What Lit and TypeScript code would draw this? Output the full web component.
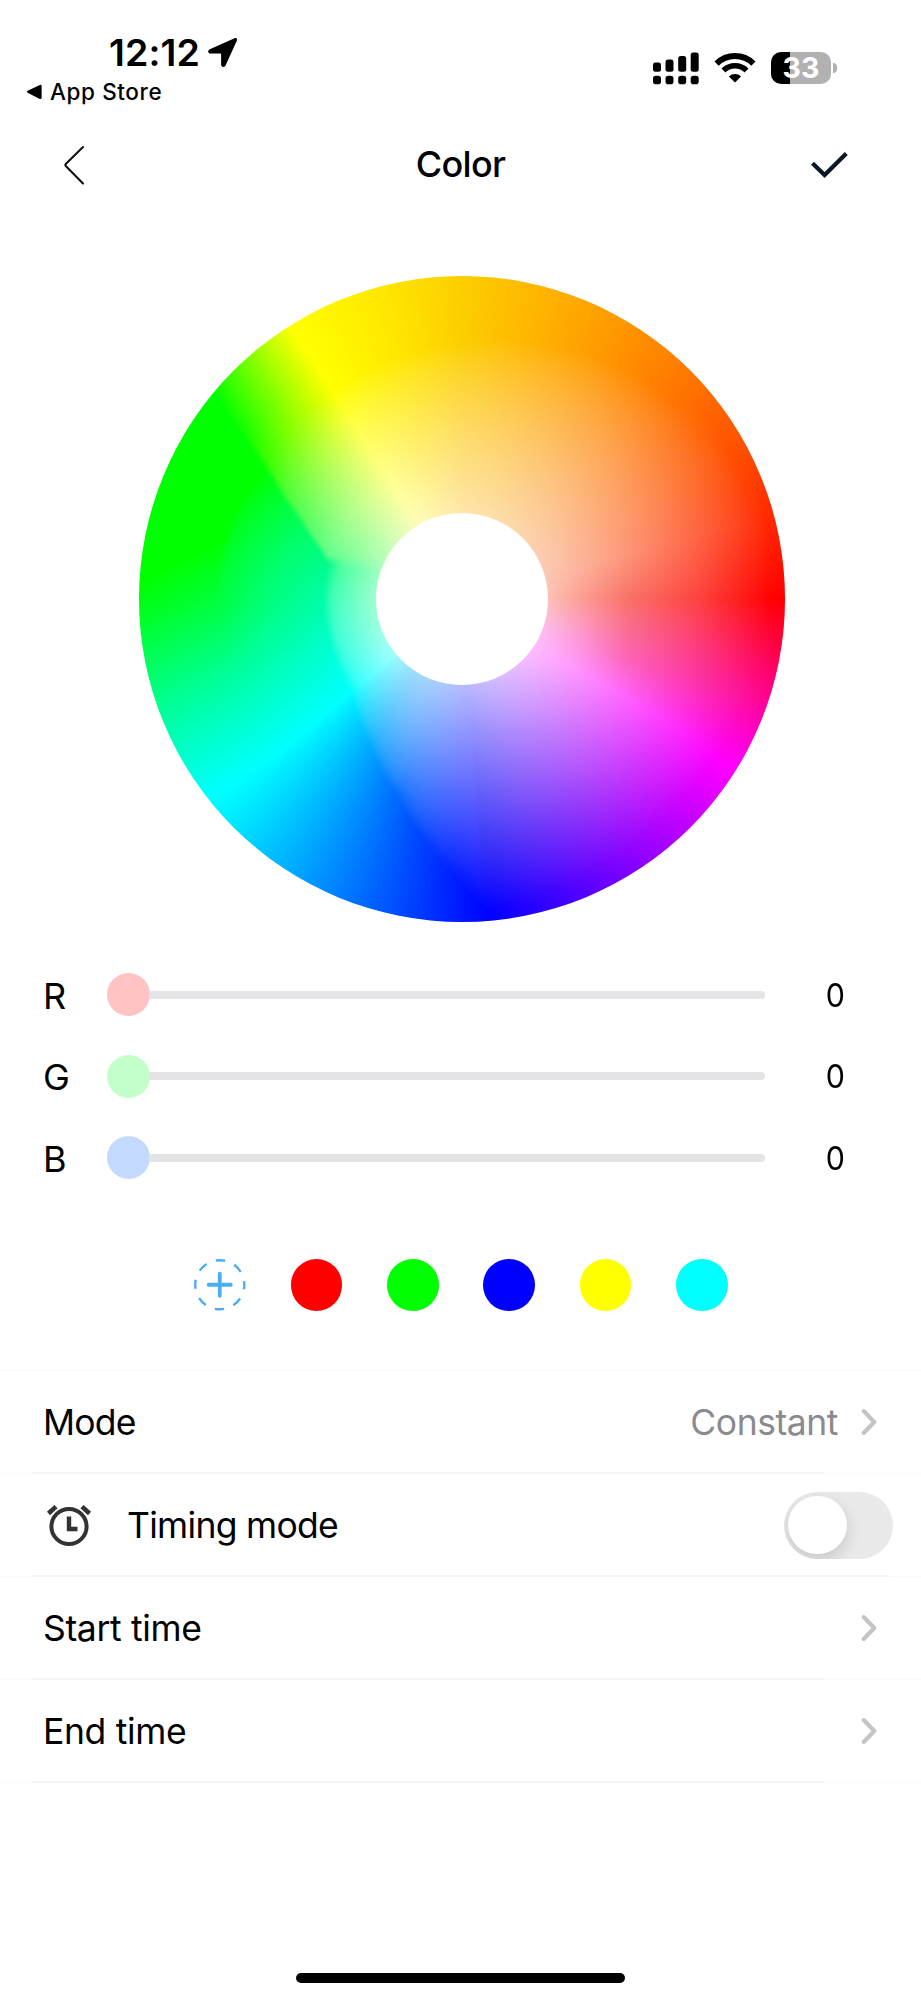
import { LitElement, html, css, svg } from "lit";
import { customElement, property } from "lit/decorators.js";

type RGB = [number, number, number];
/** [radius, angle in degrees counter-clockwise from east, colour] */
type Node = [number, number, RGB];

const OUTER = 743;
const INNER = 190;

const lerp = (a: number, b: number, t: number) => a + (b - a) * t;
const mix = (a: RGB, b: RGB, t: number): RGB => [lerp(a[0], b[0], t), lerp(a[1], b[1], t), lerp(a[2], b[2], t)];

/** A straight spoke, pure outside the edge radius and fading to a pale tint at the hub. */
const spoke = (angle: number, edge: number, pure: RGB, pale: RGB, power = 0.8): Node[] => {
  const nodes: Node[] = [[OUTER, angle, pure]];
  for (let i = 0; i <= 12; i++) {
    const t = i / 12;
    nodes.push([lerp(edge, INNER, t), angle, mix(pure, pale, Math.pow(t, power))]);
  }
  return nodes;
};

/** Where the pale area begins between blue and cyan: [angle, radius]. */
const EDGE: [number, number][] = [[-85, 728], [-90.4, 649], [-98.6, 565], [-107.5, 481], [-121.8, 399], [-140, 330]];

const blueToCyan = (): Node[][] => {
  const out: Node[][] = [];
  for (let a = -86.5; a >= -138; a -= 1.5) {
    let i = 1;
    while (a < EDGE[i][0]) i++;
    const t = (EDGE[i - 1][0] - a) / (EDGE[i - 1][0] - EDGE[i][0]);
    const edge = lerp(EDGE[i - 1][1], EDGE[i][1], t);
    const h = (-85 - a) / 55.5;
    const pale: RGB = h < 0.7 ? mix([188, 186, 254], [162, 222, 252], h / 0.7) : mix([162, 222, 252], [162, 253, 255], (h - 0.7) / 0.3);
    out.push(spoke(a, edge, [0, 255 * h, 255], pale, lerp(0.98, 0.66, Math.min(1, h / 0.45))));
  }
  return out;
};

/** Colour curves of the wheel, ordered clockwise starting at red. */
const CURVES: Node[][] = [
  [[743, 0, [255, 0, 0]], [705, 0, [255, 4, 4]], [640, 0, [254, 30, 28]], [537, 0, [253, 69, 66]], [383, 0, [249, 113, 103]], [306, 0, [251, 144, 134]], [190, 0, [252, 195, 184]]],
  [[743, -20, [255, 0, 160]], [394, -20, [252, 104, 186]], [300, -20, [253, 145, 215]], [190, -20, [254, 190, 238]]],
  [[743, -32, [255, 0, 255]], [690, -32, [255, 0, 255]], [560, -31, [255, 50, 255]], [395, -31, [255, 116, 255]], [300, -32, [255, 152, 255]], [190, -35, [255, 192, 255]]],
  [[743, -85, [0, 0, 255]], [720, -85, [2, 2, 255]], [570, -85, [54, 53, 246]], [470, -85, [89, 88, 249]], [350, -85, [131, 130, 251]], [190, -85, [190, 188, 255]]],
  ...blueToCyan(),
  [[743, -141.7, [0, 255, 255]], [708, -141.7, [0, 255, 255]], [556, -139.8, [0, 255, 255]], [333, -139.8, [0, 255, 255]], [310, -139.8, [55, 255, 255]], [222, -139.8, [145, 255, 255]], [190, -139.8, [165, 255, 255]]],
  [[743, -160, [0, 255, 150]], [560, -160, [0, 255, 164]], [450, -160, [0, 255, 184]], [322, -160, [0, 255, 208]], [300, -160, [65, 255, 218]], [190, -160, [165, 255, 230]]],
  [[743, -178, [0, 255, 28]], [560, -178, [0, 255, 68]], [450, -178, [0, 255, 124]], [320, -178, [0, 253, 172]], [298, -178, [65, 255, 190]], [190, -178, [165, 255, 210]]],
  [[743, -182.4, [0, 255, 0]], [562, -194, [0, 255, 0]], [556, -203.4, [0, 255, 0]], [540, -210, [0, 255, 4]], [516, -209, [0, 255, 26]], [414, -202, [0, 255, 98]], [320, -192, [0, 252, 146]], [290, -192, [70, 255, 165]], [190, -192, [165, 255, 200]]],
  [[743, -219.3, [0, 255, 0]], [732, -219.5, [0, 255, 0]], [623, -216.4, [0, 255, 0]], [547, -213.5, [0, 255, 0]], [516, -212, [0, 255, 22]], [414, -205.3, [0, 255, 90]], [356, -199.6, [0, 252, 118]], [320, -194.6, [0, 250, 138]], [290, -195, [75, 255, 160]], [190, -197, [168, 255, 194]]],
  [[743, -220.5, [12, 255, 0]], [623, -217.8, [28, 255, 0]], [560, -215.5, [50, 255, 0]], [516, -213.8, [68, 254, 22]], [414, -207.6, [86, 253, 92]], [356, -202.2, [92, 253, 120]], [320, -198, [100, 253, 140]], [260, -202, [140, 255, 162]], [190, -203, [178, 255, 188]]],
  [[743, -237.6, [255, 255, 0]], [565, -238.2, [255, 255, 0]], [480, -238.2, [255, 255, 66]], [389, -238.2, [255, 255, 116]], [300, -238.6, [255, 255, 150]], [190, -240, [255, 252, 188]]],
  spoke(-255, 575, [255, 231, 0], [255, 242, 178]),
  spoke(-270, 590, [252, 206, 0], [254, 230, 172]),
  spoke(-285, 612, [255, 180, 0], [253, 226, 170]),
  spoke(-300, 640, [255, 152, 0], [252, 220, 172]),
  spoke(-315, 665, [255, 120, 0], [252, 214, 176]),
  spoke(-330, 700, [255, 84, 0], [252, 208, 180], 0.85),
  spoke(-345, 725, [255, 42, 0], [252, 202, 182], 0.85),
];

const sample = (curve: Node[], r: number): [number, RGB] => {
  if (r >= curve[0][0]) return [curve[0][1], curve[0][2]];
  for (let i = 1; i < curve.length; i++) {
    const a = curve[i - 1];
    const b = curve[i];
    if (r >= b[0] && a[0] > b[0]) {
      const t = (a[0] - r) / (a[0] - b[0]);
      return [lerp(a[1], b[1], t), mix(a[2], b[2], t)];
    }
  }
  const last = curve[curve.length - 1];
  return [last[1], last[2]];
};

const conicAt = (r: number): string => {
  const stops = CURVES.map((c) => sample(c, r)).map(([a, c]) => `rgb(${c.map((v) => v.toFixed(1)).join(",")}) ${(-a).toFixed(2)}deg`);
  const red = sample(CURVES[0], r)[1];
  stops.push(`rgb(${red.map((v) => v.toFixed(1)).join(",")}) 360deg`);
  return `conic-gradient(from 90deg, ${stops.join(",")})`;
};

const RINGS = 110;

@customElement("color-wheel")
class ColorWheel extends LitElement {
  static styles = css`
    :host { display: block; }
    .wheel { display: grid; width: 646px; height: 646px; border-radius: 50%; overflow: hidden; }
    .layer { grid-area: 1 / 1; }
    .hub { grid-area: 1 / 1; place-self: center; z-index: 1; width: 172px; height: 172px; border-radius: 50%; background: #fff; }
  `;
  render() {
    const layers = [];
    for (let i = 0; i <= RINGS; i++) {
      const r = lerp(OUTER, INNER, i / RINGS);
      const px = (r / OUTER) * 323;
      const next = (lerp(OUTER, INNER, (i - 1) / RINGS) / OUTER) * 323;
      const mask = i === 0 ? "" : `mask-image:radial-gradient(circle,#000 ${px.toFixed(2)}px,transparent ${next.toFixed(2)}px)`;
      layers.push(html`<div class="layer" style="background:${conicAt(r)};${mask}"></div>`);
    }
    return html`<div class="wheel">${layers}<div class="hub"></div></div>`;
  }
}

@customElement("channel-slider")
class ChannelSlider extends LitElement {
  @property() label = "";
  @property() tint = "";
  @property({ type: Number }) value = 0;
  static styles = css`
    :host { display: flex; align-items: center; height: 81.5px; padding-left: 43px; }
    .label { width: 64px; font-size: 36px; line-height: 44px; padding-top: 1.5px; box-sizing: border-box; }
    .bar { display: flex; align-items: center; width: 658px; }
    .thumb { width: 43.2px; height: 43.2px; border-radius: 50%; }
    .track { flex: 1; height: 8px; background: #e4e4e6; border-radius: 0 4px 4px 0; margin-left: -1px; }
    .value { width: 140px; text-align: center; font-size: 33px; line-height: 44px; }
    .digit { display: inline-block; transform: scaleX(0.92); }
  `;
  render() {
    return html`
      <div class="label">${this.label}</div>
      <div class="bar"><div class="thumb" style="background:${this.tint}"></div><div class="track"></div></div>
      <div class="value"><span class="digit">${this.value}</span></div>`;
  }
}

const chevron = html`<svg width="16" height="28" viewBox="0 0 16 28" fill="none" stroke="#c4c4c6" stroke-width="4" stroke-linecap="round" stroke-linejoin="round"><path d="M2.7 3 13.3 14 2.7 25" /></svg>`;

@customElement("app-root")
class AppRoot extends LitElement {
  static styles = css`
    :host { display: flex; flex-direction: column; width: 921px; height: 2000px; background: #fff; color: #000; font-family: Inter, "Liberation Sans", sans-serif; overflow: hidden; }
    svg { display: block; }
    .status { display: flex; justify-content: space-between; height: 110px; box-sizing: border-box; padding: 31px 84px 0 26px; }
    .clock { display: flex; align-items: center; height: 44px; padding-left: 83px; gap: 8.5px; }
    .time { font-size: 37.5px; font-weight: 600; line-height: 44px; letter-spacing: 0.1px; }
    .back-app { display: flex; align-items: center; gap: 8px; height: 33px; font-size: 22.5px; font-weight: 500; letter-spacing: 0.6px; }
    .right { display: flex; padding-top: 19.5px; gap: 15px; }
    .battery { display: flex; align-items: center; gap: 2px; height: 34px; }
    .cell { width: 60px; height: 32px; border-radius: 10px; box-sizing: border-box; background: linear-gradient(90deg, #000 19.5px, #b1b1b1 19.5px); color: #fff; font-size: 28.5px; font-weight: 700; line-height: 32px; text-align: center; }
    .nub { width: 4px; height: 10px; border-radius: 0 5px 5px 0; background: #b1b1b1; }
    .nav { display: grid; grid-template-columns: 1fr auto 1fr; align-items: center; height: 110px; box-sizing: border-box; padding: 0 72px 0 63px; }
    .title { font-size: 36px; font-weight: 500; line-height: 44px; letter-spacing: -0.7px; translate: 4.5px -1px; }
    .confirm { justify-self: end; }
    .picker { padding: 56px 0 0 138.6px; height: 734px; box-sizing: border-box; }
    .sliders { height: 277px; }
    .swatches { display: flex; gap: 44.9px; height: 138.5px; padding: 28px 0 0 194.3px; box-sizing: border-box; }
    .swatch { width: 51.5px; height: 51.5px; border-radius: 50%; }
    .list { border-top: 1.5px solid #f8f8f8; }
    .row { display: flex; align-items: center; height: 103px; box-sizing: border-box; padding: 0 44px 0 43px; font-size: 35.5px; letter-spacing: -0.35px; background: linear-gradient(#f5f5f5, #f5f5f5) 32px 100% / 792px 2px no-repeat, linear-gradient(#fafafa, #fafafa) 0 100% / 100% 1px no-repeat; }
    .row.timing { padding-right: 28px; letter-spacing: -0.7px; background-size: 857px 2px, 100% 1px; }
    .row.mode { letter-spacing: -0.75px; }
    .name { flex: 1; padding-top: 1px; }
    .detail { color: #8a8a8e; padding: 1px 23px 0 0; letter-spacing: -0.45px; }
    .alarm { margin: 0 34.5px 0 1.5px; }
    .toggle { width: 109px; height: 67px; border-radius: 34px; background: #e9e9ea; box-sizing: border-box; padding: 4px; overflow: hidden; }
    .knob { width: 58.5px; height: 58.5px; border-radius: 50%; background: #fff; box-shadow: 0 6px 16px rgba(0, 0, 0, 0.15); }
    .home { width: 329px; height: 10.5px; border-radius: 6px; background: #000; margin: auto auto 17px; }
  `;

  private signal() {
    const bars = [
      [0, 61.5], [12.5, 58.5], [25.2, 55], [37.7, 51.5],
    ];
    return html`<svg width="46" height="34" viewBox="0 50 46 34">
      ${bars.map(([x, y]) => svg`<rect x=${x} y=${y} width="8" height=${70.7 - y} rx="2.5" /><rect x=${x} y="74.7" width="8" height="8.5" rx="2.8" />`)}
    </svg>`;
  }

  render() {
    return html`
      <header class="status">
        <div>
          <div class="clock">
            <span class="time">12:12</span>
            <svg width="30" height="30" viewBox="0 0 30 30"><path d="M26.5.3 1.8 11.2C-.6 12.3-.2 15.6 2.4 15.6H12.3Q13.1 15.6 13.1 16.4V26.4C13.1 29.3 16.5 29.8 17.7 27.3L28.8 2.8C29.6.9 28.3-.5 26.5.3Z" /></svg>
          </div>
          <div class="back-app">
            <svg width="16" height="16" viewBox="0 0 16 16"><path d="M13.8.9 1.6 6.8Q.2 7.8 1.6 8.8L13.8 14.9Q15.6 15.4 15.6 13.8V2Q15.6.4 13.8.9Z" /></svg>
            <span>App Store</span>
          </div>
        </div>
        <div class="right">
          ${this.signal()}
          <svg width="42" height="34" viewBox="0 0 42 34" fill="none" stroke="#000">
            <path d="M2.6 12.6A26.2 26.2 0 0 1 39.4 12.6" stroke-width="6" />
            <path d="M9.4 19.5A16.6 16.6 0 0 1 32.6 19.5" stroke-width="5.6" />
            <path d="M21 31.6 14.9 25.4A8.8 8.8 0 0 1 27.1 25.4Z" fill="#000" stroke="none" />
          </svg>
          <div class="battery"><div class="cell">33</div><div class="nub"></div></div>
        </div>
      </header>
      <nav class="nav">
        <svg width="22" height="40" viewBox="0 0 22 40" fill="none" stroke="#111" stroke-width="2.1" stroke-linecap="round" stroke-linejoin="round"><path d="M20 2 3 18.7Q1.8 20 3 21.2L20 38.5" /></svg>
        <div class="title">Color</div>
        <svg class="confirm" width="38" height="28" viewBox="0 0 38 28" fill="none" stroke="#0b1828" stroke-width="4.2"><path d="M1.5 12.3 13.6 24.1 35.3 2.5" /></svg>
      </nav>
      <section class="picker"><color-wheel></color-wheel></section>
      <section class="sliders">
        <channel-slider label="R" tint="#ffc3c3"></channel-slider>
        <channel-slider label="G" tint="#c3ffc9"></channel-slider>
        <channel-slider label="B" tint="#c3dafe"></channel-slider>
      </section>
      <section class="swatches">
        <svg width="51.5" height="51.5" viewBox="0 0 52 52" fill="none" stroke="#4badf2" stroke-width="2.4">
          <circle cx="26" cy="26" r="24.8" stroke-dasharray="9.6 9.878" stroke-dashoffset="4.8" />
          <path d="M14.8 26H37.2M26 14.8V37.2" stroke-width="3.8" stroke-linecap="round" />
        </svg>
        ${["#f00", "#0f0", "#00f", "#ff0", "#0ff"].map((c) => html`<div class="swatch" style="background:${c}"></div>`)}
      </section>
      <section class="list">
        <div class="row mode"><span class="name">Mode</span><span class="detail">Constant</span>${chevron}</div>
        <div class="row timing">
          <svg class="alarm" width="48" height="44" viewBox="0 0 48 44" fill="none" stroke="#333" stroke-width="4">
            <circle cx="24" cy="23.5" r="17.6" /><path d="M24 13.5V26H32.5" stroke-width="4.4" /><path d="M3.5 10.5 11 3.6M44.5 10.5 37 3.6" stroke-width="4.6" />
          </svg>
          <span class="name">Timing mode</span>
          <div class="toggle"><div class="knob"></div></div>
        </div>
        <div class="row"><span class="name">Start time</span>${chevron}</div>
        <div class="row"><span class="name">End time</span>${chevron}</div>
      </section>
      <div class="home"></div>`;
  }
}
